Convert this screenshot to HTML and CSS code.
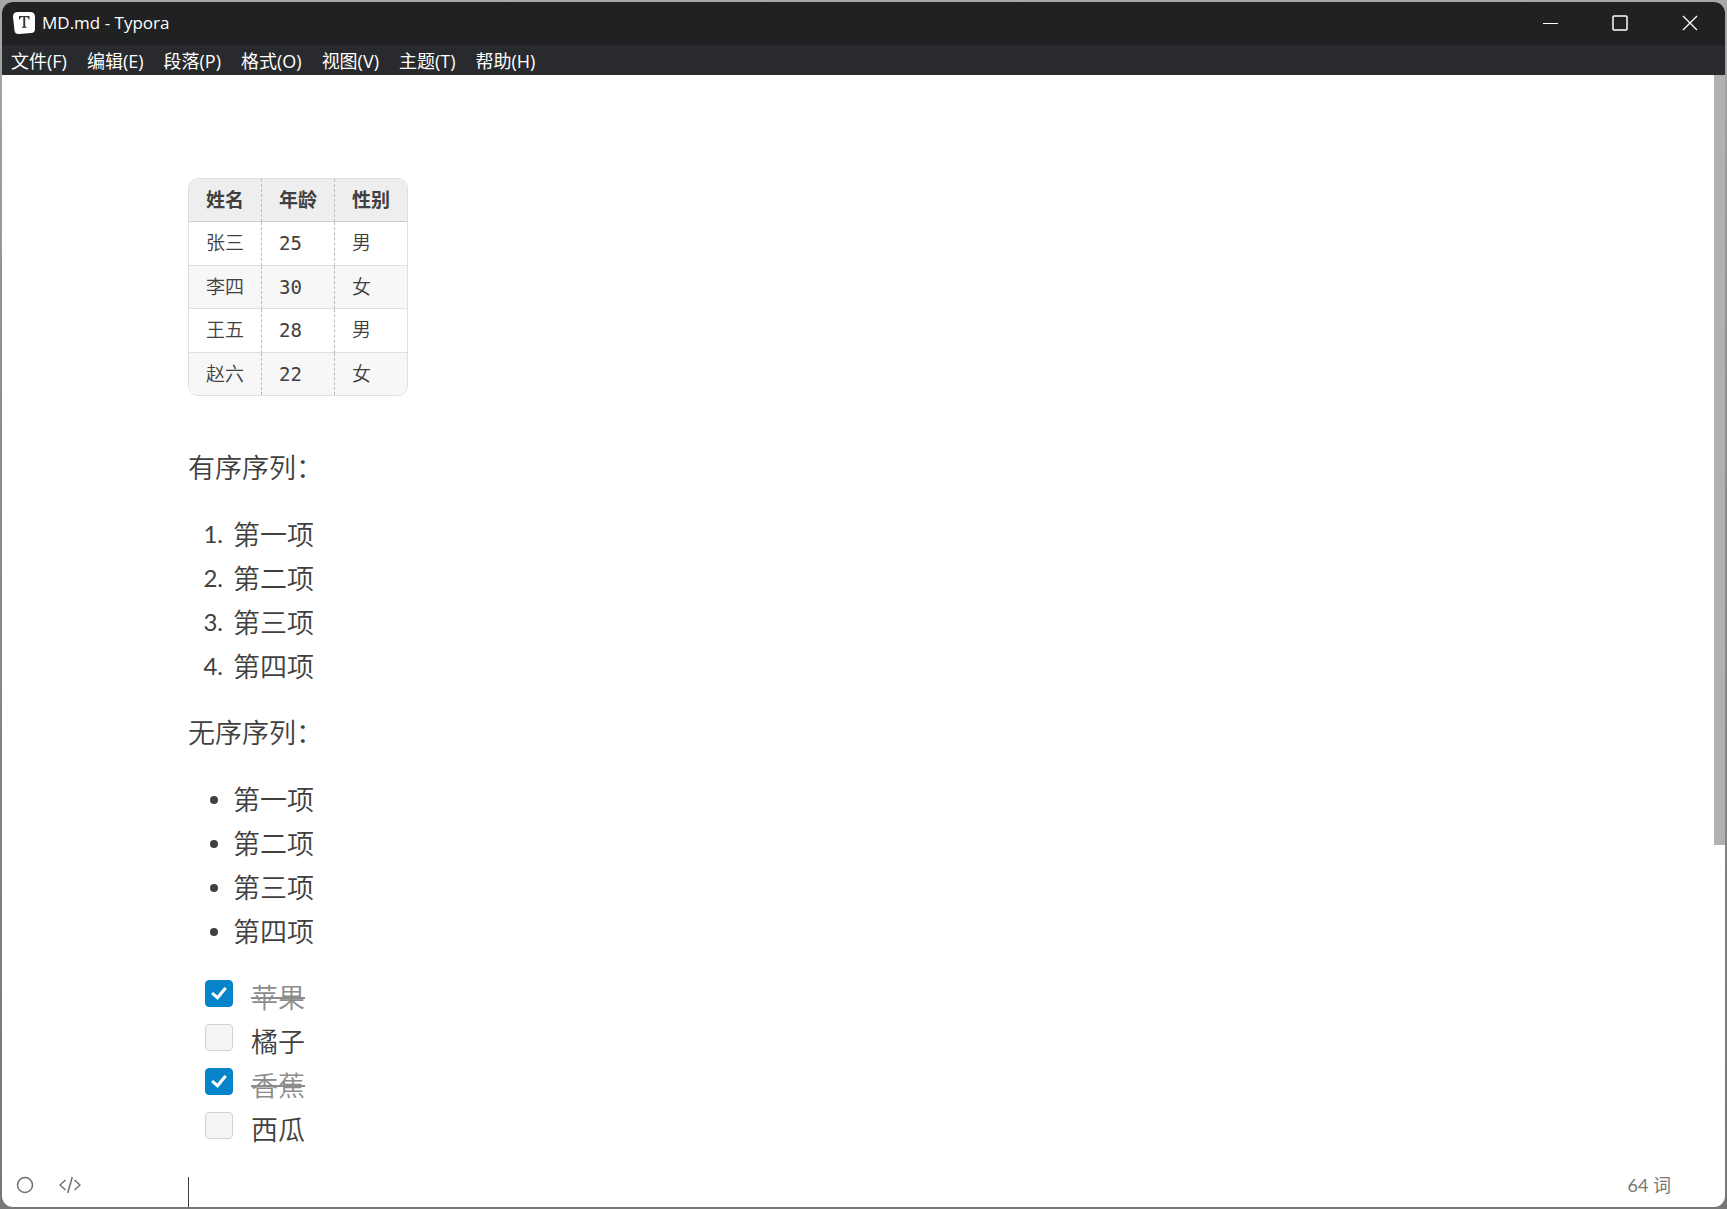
FILE: index.html
```html
<!DOCTYPE html>
<html lang="zh-CN">
<head>
<meta charset="utf-8">
<title>MD.md - Typora</title>
<link rel="stylesheet" href="styles.css">
</head>
<body>
<div class="window">
  <header class="titlebar">
    <svg class="app-icon" width="24" height="24" viewBox="0 0 24 24" aria-hidden="true">
      <path d="M6 1h12q5 0 5 5v12q0 4-4 4L7 23q-4 .3-4.500-3.500L1 6q-.3-5 5-5z" fill="#fff"/>
      <path d="M7 5h10.500v3.500h-.8q-.3-2.500-2.200-2.500h-1.300v9q0 1 1.500 1.100v.7H9.800v-.7q1.500-.1 1.500-1.100V6H10Q8.100 6 7.800 8.500H7z" fill="#333"/>
    </svg>
    <span class="title">MD.md - Typora</span>
    <div class="controls">
      <button type="button" aria-label="最小化"><svg width="16" height="16" viewBox="0 0 16 16"><path d="M1 8.500h15"/></svg></button>
      <button type="button" aria-label="最大化"><svg width="16" height="16" viewBox="0 0 16 16"><rect x="1" y="1" width="14" height="14" rx="1" stroke-width="1.500"/></svg></button>
      <button type="button" aria-label="关闭"><svg width="16" height="16" viewBox="0 0 16 16"><path d="M1 1l14 14M15 1L1 15" stroke-width="1.300"/></svg></button>
    </div>
  </header>
  <nav class="menubar">
    <button type="button">文件(F)</button>
    <button type="button">编辑(E)</button>
    <button type="button">段落(P)</button>
    <button type="button">格式(O)</button>
    <button type="button">视图(V)</button>
    <button type="button">主题(T)</button>
    <button type="button">帮助(H)</button>
  </nav>
  <div class="workspace">
    <main class="editor">
      <table class="people">
        <thead><tr><th>姓名</th><th>年龄</th><th>性别</th></tr></thead>
        <tbody>
          <tr><td>张三</td><td>25</td><td>男</td></tr>
          <tr><td>李四</td><td>30</td><td>女</td></tr>
          <tr><td>王五</td><td>28</td><td>男</td></tr>
          <tr><td>赵六</td><td>22</td><td>女</td></tr>
        </tbody>
      </table>
      <p>有序序列：</p>
      <ol class="list ordered">
        <li>第一项</li><li>第二项</li><li>第三项</li><li>第四项</li>
      </ol>
      <p>无序序列：</p>
      <ul class="list bulleted">
        <li>第一项</li><li>第二项</li><li>第三项</li><li>第四项</li>
      </ul>
      <ul class="tasks">
        <li><input type="checkbox" id="apple" checked><label for="apple">苹果</label></li>
        <li><input type="checkbox" id="orange"><label for="orange">橘子</label></li>
        <li><input type="checkbox" id="banana" checked><label for="banana">香蕉</label></li>
        <li><input type="checkbox" id="melon"><label for="melon">西瓜</label></li>
      </ul>
      <div class="caret"></div>
    </main>
    <div class="scrollbar"><div class="thumb"></div></div>
    <footer class="status">
      <button type="button" aria-label="侧边栏"><svg width="18" height="18" viewBox="0 0 18 18"><circle cx="9" cy="9" r="7.500"/></svg></button>
      <button type="button" aria-label="源代码模式"><svg width="22" height="18" viewBox="0 0 22 18"><path d="M6.500 4L1 9l5.500 5M15.500 4L21 9l-5.500 5M13.300 1L8.700 17"/></svg></button>
      <span class="count">64 词</span>
    </footer>
  </div>
</div>
</body>
</html>
```
FILE: styles.css
```css
* {
  box-sizing: border-box;
}

body {
  height: 100vh;
  margin: 0;
  padding: 2px;
  overflow: hidden;
  background: linear-gradient(#a6a7a8, #8f8f8f 30%, #777);
  color: #404040;
  font-family: "Noto Sans CJK SC", sans-serif;
}

button {
  padding: 0;
  border: 0;
  background: none;
  color: inherit;
  font: inherit;
}

svg {
  display: block;
  fill: none;
}

.window {
  display: flex;
  flex-direction: column;
  height: 100%;
  overflow: hidden;
  border-radius: 11px;
  background: #fff;
}

.titlebar {
  display: flex;
  flex: none;
  align-items: center;
  height: 43px;
  padding: 0 0 2px 10px;
  background: #202122;
  color: #fff;
}

.title {
  margin-left: 6px;
  font: 17px/24px "Open Sans", sans-serif;
}

.controls {
  display: flex;
  margin-left: auto;
  stroke: #fff;
}

.controls button {
  display: grid;
  place-items: center;
  width: 70px;
  height: 40px;
}

.menubar {
  display: flex;
  flex: none;
  gap: 20px;
  height: 30px;
  padding: 1px 0 0 9px;
  background: #292a2d;
  color: #fff;
  font: 18px/30px "Open Sans", "Noto Sans CJK SC", sans-serif;
}

.workspace {
  position: relative;
  display: flex;
  flex: 1;
  min-height: 0;
}

.editor {
  flex: 1;
  padding: 103px 186px 0;
  overflow: hidden;
  font-size: 27px;
  font-weight: 350;
  line-height: 44px;
}

.people {
  margin-bottom: 49px;
  overflow: hidden;
  border: 1px solid #dfdfdf;
  border-radius: 10px;
  border-spacing: 0;
  font-family: "DejaVu Sans Mono", "Noto Sans CJK SC", monospace;
  font-size: 19px;
  font-weight: 350;
  line-height: 28px;
  text-align: left;
}

.people th,
.people td {
  height: 43px;
  padding: 0 17px 1px;
  border-right: 1px dashed #bbb;
  border-bottom: 1px solid #dfdfdf;
}

.people th {
  border-bottom-color: #ccc;
  background: #eee;
  font-weight: 700;
}

.people tbody tr:nth-child(odd) td {
  height: 44px;
}

.people tbody tr:nth-child(even) td {
  background: #f7f7f7;
}

.people tr > :last-child {
  border-right: 0;
}

.people tbody tr:last-child td {
  height: 42px;
  border-bottom: 0;
}

p {
  margin: 0 0 23px;
}

ol,
ul {
  margin: 0 0 22px;
  padding: 0;
  list-style: none;
}

.list li {
  display: grid;
  grid-template-columns: 35px 1fr;
  column-gap: 10px;
  align-items: center;
}

.ordered {
  counter-reset: item;
}

.ordered li::before {
  content: counter(item) ".";
  counter-increment: item;
  font-family: Lato, sans-serif;
  font-size: 24px;
  font-weight: 400;
  text-align: right;
}

.bulleted li::before {
  content: "";
  justify-self: end;
  width: 8px;
  height: 8px;
  margin: 2px 5px 0 0;
  border-radius: 50%;
  background: #404040;
}

.tasks li {
  display: flex;
  gap: 18px;
  padding-left: 17px;
}

.tasks input {
  appearance: none;
  width: 28px;
  height: 27px;
  margin: 5px 0 0;
  border: 1px solid #d3d3d3;
  border-radius: 4px;
  background: #f4f4f4;
}

.tasks input:checked {
  display: grid;
  place-items: center;
  border-color: #0584ca;
  background: #0584ca;
}

.tasks input:checked::before {
  content: "";
  width: 16px;
  height: 13px;
  background: #fff;
  clip-path: polygon(0 54%, 14% 39%, 39% 65%, 84% 0, 100% 14%, 42% 100%);
}

.tasks input:checked + label {
  color: #8c8c8c;
  text-decoration: line-through;
  text-decoration-thickness: 2px;
}

.caret {
  width: 1px;
  height: 36px;
  margin-top: 26px;
  background: #404040;
}

.scrollbar {
  width: 11px;
}

.thumb {
  height: 68%;
  background: #b1b1b1;
}

.status {
  position: absolute;
  right: 0;
  bottom: 0;
  left: 0;
  display: flex;
  gap: 25px;
  align-items: center;
  height: 44px;
  padding: 0 54px 0 14px;
  color: #777;
  font: 18px/24px Lato, "Noto Sans CJK SC", sans-serif;
}

.status svg {
  stroke: #707070;
  stroke-width: 1.5px;
}

.count {
  margin-left: auto;
}
```
